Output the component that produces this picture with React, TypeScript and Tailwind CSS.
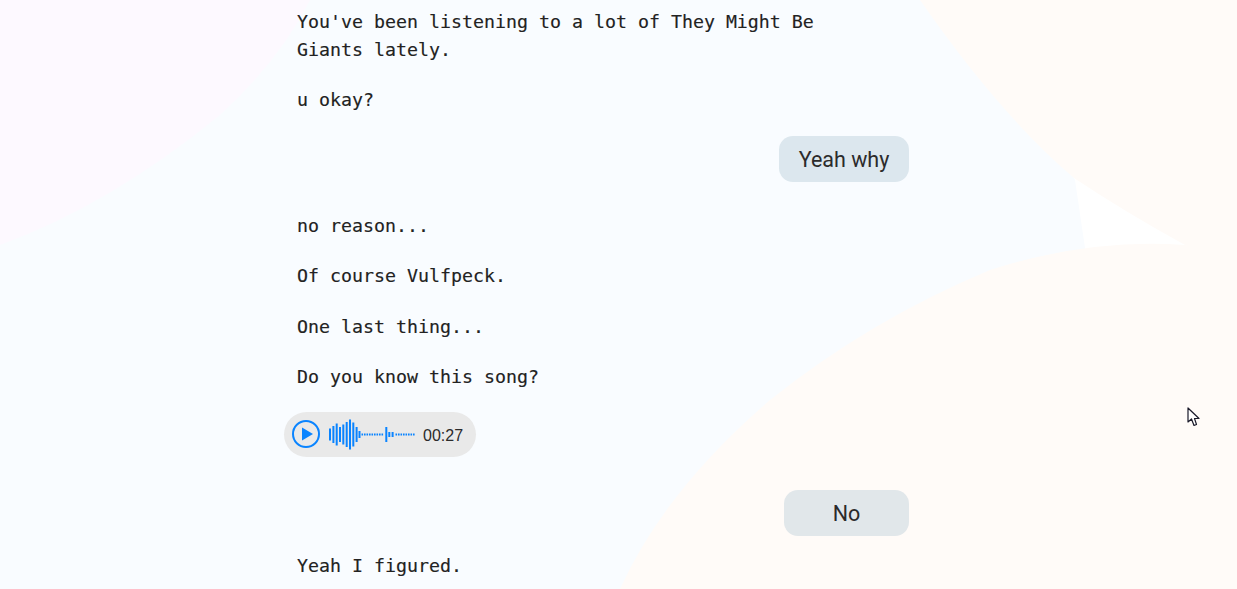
import React from 'react'

// x, height of the waveform bars, in page coordinates
const BARS = [
  [330, 12], [333.4, 17], [336.7, 22], [340, 15], [343.3, 20], [346.7, 25], [350, 30], [353.3, 24], [356.6, 15], [359.5, 7],
  [386.3, 15], [389.3, 5], [392.6, 5],
]

function Waveform() {
  const dots: number[] = []
  for (let x = 362.5; x < 384; x += 2.5) dots.push(x)
  for (let x = 396.5; x < 416; x += 2.5) dots.push(x)
  return (
    <svg width="88" height="34" viewBox="329 417 88 34" className="shrink-0">
      {BARS.map(([x, h]) => (
        <rect key={x} x={x - 1} y={434.5 - h / 2} width="2" height={h} fill="#0a84ff" />
      ))}
      {dots.map((x) => (
        <rect key={x} x={x - 1} y="433.5" width="1.6" height="2" fill="#0a84ff" />
      ))}
    </svg>
  )
}

function Bot({ children }: { children: React.ReactNode }) {
  return (
    <p className="px-[13px] text-[18.27px] leading-[28px] mb-[22.5px] text-[#222] [-webkit-text-stroke:0.15px_#222]">
      {children}
    </p>
  )
}

function Me({ children, bg, w }: { children: React.ReactNode; bg: string; w: string }) {
  return (
    <div className="flex justify-end">
      <div className={`${bg} ${w} h-[46px] pt-[4px] rounded-[14px] flex items-center justify-center text-[21.5px] text-[#2b2b2b] font-['Roboto',sans-serif]`}>
        {children}
      </div>
    </div>
  )
}

export default function App() {
  return (
    <div className="relative h-[589px] w-full overflow-hidden bg-white">
      {/* Background blobs */}
      <svg className="absolute inset-0" width="1237" height="589" viewBox="0 0 1237 589">
        <path d="M0 0H920Q1050 130 1075 180L1085 248L1100 600H0Z" fill="#f9fcff" />
        <path d="M0 0H310Q280 60 220 115Q110 205 0 245Z" fill="#fdf9ff" />
        <path d="M920 0H1237V260L1185 245Q1125 212 1074 178Q1000 115 920 0Z" fill="#fffbf8" />
        <path d="M620 589Q665 490 770 400Q870 320 990 270Q1090 238 1185 245L1237 252V589Z" fill="#fffbf8" />
      </svg>

      <div className="relative ml-[284px] w-[625px] pt-[7.6px] font-['DejaVu_Sans_Mono',monospace]">
        <Bot>You've been listening to a lot of They Might Be<br />Giants lately.</Bot>
        <Bot>u okay?</Bot>
        <div className="-mt-px mb-[30px]">
          <Me bg="bg-[#dce7ee]" w="w-[130px]">Yeah why</Me>
        </div>
        <Bot>no reason...</Bot>
        <Bot>Of course Vulfpeck.</Bot>
        <Bot>One last thing...</Bot>
        <Bot>Do you know this song?</Bot>

        <div className="-mt-[2px] mb-[33px] flex h-[45px] w-[192px] items-center rounded-[23px] bg-[#e9e9e9] pl-2">
          <svg width="28" height="28" viewBox="0 0 28 28" className="shrink-0">
            <circle cx="14" cy="14" r="13" fill="none" stroke="#0a84ff" strokeWidth="2" />
            <path d="M10 7.5L21 14L10 20.5Z" fill="#0a84ff" />
          </svg>
          <div className="ml-[9px]">
            <Waveform />
          </div>
          <span className="ml-[6px] pt-[3px] text-[16px] text-[#2b2b2b] font-['Liberation_Sans',sans-serif]">00:27</span>
        </div>

        <div className="mb-[16px]">
          <Me bg="bg-[#e1e7ea]" w="w-[125px]">No</Me>
        </div>
        <Bot>Yeah I figured.</Bot>
      </div>

      {/* Mouse cursor */}
      <svg className="absolute left-[1187px] top-[407px]" width="14" height="22" viewBox="0 0 14 22">
        <path d="M1 1V15L4.5 12L7 18.5L9.5 17.5L7.5 11.5H12Z" fill="#fff" stroke="#1a1a2a" strokeWidth="1.2" strokeLinejoin="round" />
      </svg>
    </div>
  )
}
